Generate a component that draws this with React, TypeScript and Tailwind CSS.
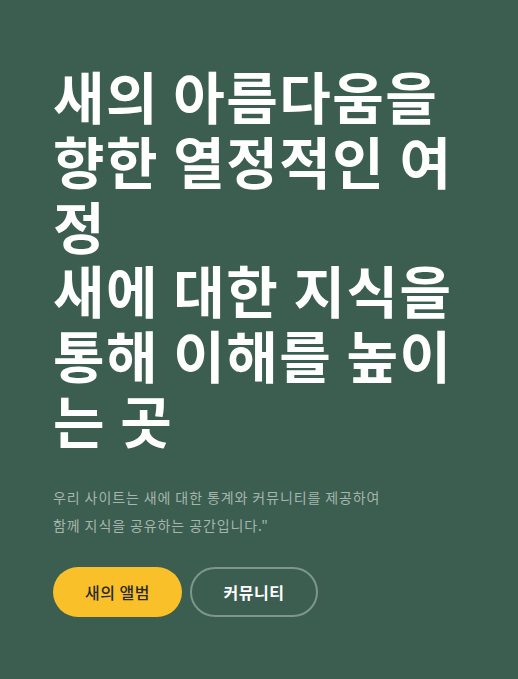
import React from "react";

const font = { fontFamily: '"Noto Sans CJK KR", "Noto Sans", sans-serif' };

export default function App() {
  return (
    <div className="min-h-[679px] w-full bg-[#3b5e50]" style={font}>
      <div className="pl-[53px] pr-[40px] pt-[63px]">
        <h1 className="text-[56px] font-bold leading-[64.8px] text-white tracking-[1.5px]">
          <span className="block whitespace-nowrap">새의 아름다움을</span>
          <span className="block whitespace-nowrap">향한 열정적인 여</span>
          <span className="block whitespace-nowrap">정</span>
          <span className="block whitespace-nowrap">새에 대한 지식을</span>
          <span className="block whitespace-nowrap">통해 이해를 높이</span>
          <span className="block whitespace-nowrap">는 곳</span>
        </h1>
        <p className="mt-[31px] text-[14px] leading-[28px] tracking-[0.9px] text-[#a6b5ad]">
          <span className="block whitespace-nowrap">우리 사이트는 새에 대한 통계와 커뮤니티를 제공하여</span>
          <span className="block whitespace-nowrap">함께 지식을 공유하는 공간입니다."</span>
        </p>
        <div className="mt-[28px] flex gap-[8px]">
          <button className="flex h-[50px] w-[129px] items-center justify-center rounded-full bg-[#f9c02a] text-[16px] font-medium tracking-[0.5px] text-[#2a2a2a]">
            새의 앨범
          </button>
          <button className="flex h-[50px] w-[128px] items-center justify-center rounded-full border-2 border-[#7f968c] text-[16px] font-bold tracking-[0.5px] text-white">
            커뮤니티
          </button>
        </div>
      </div>
    </div>
  );
}
